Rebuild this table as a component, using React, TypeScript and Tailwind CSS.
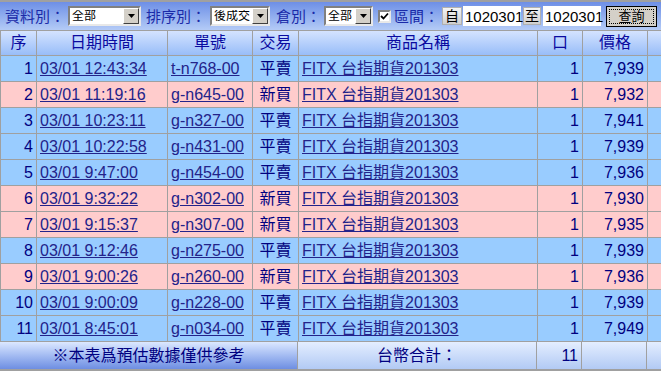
import React from 'react';

type Row = {
  no: number;
  time: string;
  id: string;
  side: string;
  qty: number;
  price: string;
};

const rows: Row[] = [
  { no: 1, time: '03/01 12:43:34', id: 't-n768-00', side: '平賣', qty: 1, price: '7,939' },
  { no: 2, time: '03/01 11:19:16', id: 'g-n645-00', side: '新買', qty: 1, price: '7,932' },
  { no: 3, time: '03/01 10:23:11', id: 'g-n327-00', side: '平賣', qty: 1, price: '7,941' },
  { no: 4, time: '03/01 10:22:58', id: 'g-n431-00', side: '平賣', qty: 1, price: '7,939' },
  { no: 5, time: '03/01 9:47:00', id: 'g-n454-00', side: '平賣', qty: 1, price: '7,936' },
  { no: 6, time: '03/01 9:32:22', id: 'g-n302-00', side: '新買', qty: 1, price: '7,930' },
  { no: 7, time: '03/01 9:15:37', id: 'g-n307-00', side: '新買', qty: 1, price: '7,935' },
  { no: 8, time: '03/01 9:12:46', id: 'g-n275-00', side: '平賣', qty: 1, price: '7,939' },
  { no: 9, time: '03/01 9:00:26', id: 'g-n260-00', side: '新買', qty: 1, price: '7,936' },
  { no: 10, time: '03/01 9:00:09', id: 'g-n228-00', side: '平賣', qty: 1, price: '7,939' },
  { no: 11, time: '03/01 8:45:01', id: 'g-n034-00', side: '平賣', qty: 1, price: '7,949' },
];

const grid = 'grid grid-cols-[36px_131px_85px_46px_239px_45px_65px_14px]';
const cell = 'border-r border-[#a0a0a0] flex items-center h-full';

const Select = ({ w, text }: { w: string; text: string }) => (
  <div className={`${w} h-[20px] shrink-0 bg-white border-2 border-t-[#808080] border-l-[#808080] border-b-[#e8e8e8] border-r-[#e8e8e8] flex items-center`}>
    <span className="flex-1 pl-[2px] text-[12px] text-black leading-none whitespace-nowrap overflow-hidden">{text}</span>
    <div className="w-[16px] h-[16px] bg-[#d4d0c8] border border-t-white border-l-white border-b-[#404040] border-r-[#404040] flex items-center justify-center">
      <svg width="7" height="4" viewBox="0 0 7 4">
        <path d="M0 0h7L3.5 4z" fill="#000" />
      </svg>
    </div>
  </div>
);

const Label = ({ children, className = '' }: { children: React.ReactNode; className?: string }) => (
  <span className={`shrink-0 text-[15px] text-[#1a2aa8] leading-none whitespace-nowrap ${className}`}>{children}</span>
);

export default function App() {
  return (
    <div
      className="w-[661px] h-[371px] overflow-hidden bg-[#a0a0a0] text-[#000080]"
      style={{ fontFamily: '"Liberation Sans", Arial, "Noto Sans CJK TC", sans-serif' }}
    >
      <div className="h-[2px] bg-[#a0a0a0]" />
      {/* toolbar */}
      <div className="h-[28px] bg-gradient-to-b from-[#6e8fe6] to-[#b4cbf6] flex items-center pl-[5px]">
        <Label className="w-[63px]">資料別：</Label>
        <Select w="w-[73px]" text="全部" />
        <Label className="ml-[5px] w-[64px]">排序別：</Label>
        <Select w="w-[60px]" text="後成交" />
        <Label className="ml-[6px] w-[48px]">倉別：</Label>
        <Select w="w-[49px]" text="全部" />
        <div className="ml-[5px] shrink-0 w-[13px] h-[13px] bg-white border-2 border-t-[#808080] border-l-[#808080] border-b-[#e8e8e8] border-r-[#e8e8e8] flex items-center justify-center">
          <svg width="9" height="9" viewBox="0 0 9 9">
            <path d="M1 4l2.5 2.5L8 1.5" stroke="#000" strokeWidth="1.8" fill="none" />
          </svg>
        </div>
        <Label className="ml-[3px] w-[48px]">區間：</Label>
        <div className="shrink-0 w-[20px] h-[18px] bg-gradient-to-b from-[#f4f4f4] to-[#cfcfcf] border border-[#b0b0b0] flex items-center justify-center text-[14px] text-black leading-none">
          自
        </div>
        <div className="ml-[1px] shrink-0 w-[58px] h-[20px] bg-white flex items-center pl-[2px] text-[15px] text-black leading-none">
          1020301
        </div>
        <div className="ml-[2px] shrink-0 w-[18px] h-[18px] bg-gradient-to-b from-[#f4f4f4] to-[#cfcfcf] border border-[#b0b0b0] flex items-center justify-center text-[14px] text-black leading-none">
          至
        </div>
        <div className="ml-[2px] shrink-0 w-[58px] h-[20px] bg-white flex items-center pl-[2px] text-[15px] text-black leading-none">
          1020301
        </div>
        <div className="ml-[5px] shrink-0 w-[51px] h-[21px] bg-[#d4d0c8] border border-black flex items-center justify-center">
          <div className="w-[45px] h-[15px] border border-dotted border-black flex items-center justify-center text-[13px] text-black leading-none">
            查詢
          </div>
        </div>
      </div>
      <div className="h-[1px] bg-[#a0a0a0]" />
      {/* header */}
      <div className={`${grid} h-[24px] bg-gradient-to-b from-[#d4e3ff] to-[#98bdf8] text-[16px] text-[#0a0aa0] border-l border-[#a0a0a0]`}>
        <div className={`${cell} justify-center`}>序</div>
        <div className={`${cell} justify-center`}>日期時間</div>
        <div className={`${cell} justify-center`}>單號</div>
        <div className={`${cell} justify-center`}>交易</div>
        <div className={`${cell} justify-center`}>商品名稱</div>
        <div className={`${cell} justify-center`}>口</div>
        <div className={`${cell} justify-center`}>價格</div>
        <div />
      </div>
      {/* rows */}
      {rows.map((r) => (
        <div
          key={r.no}
          className={`${grid} h-[26px] border-t border-l border-[#a0a0a0] text-[16px] ${r.side === '新買' ? 'bg-[#ffcccc]' : 'bg-[#99ccff]'}`}
        >
          <div className={`${cell} justify-end pr-[3px]`}>{r.no}</div>
          <div className={`${cell} pl-[3px]`}>
            <span className="underline text-[#23238a]">{r.time}</span>
          </div>
          <div className={`${cell} pl-[3px]`}>
            <span className="underline text-[#23238a]">{r.id}</span>
          </div>
          <div className={`${cell} justify-center`}>{r.side}</div>
          <div className={`${cell} pl-[3px]`}>
            <span className="underline text-[#23238a] whitespace-nowrap">FITX 台指期貨201303</span>
          </div>
          <div className={`${cell} justify-end pr-[3px]`}>{r.qty}</div>
          <div className={`${cell} justify-end pr-[3px]`}>{r.price}</div>
          <div />
        </div>
      ))}
      {/* footer */}
      <div className={`${grid} h-[28px] border-t border-[#a0a0a0] text-[16px]`}>
        <div className="col-span-4 border-r border-[#a0a0a0] bg-gradient-to-b from-[#dce8ff] to-[#6e8ee2] flex items-center justify-center">
          ※本表爲預估數據僅供參考
        </div>
        <div className="border-r border-[#a0a0a0] bg-gradient-to-b from-[#e4eeff] to-[#b2caf4] flex items-center justify-center">
          台幣合計：
        </div>
        <div className="border-r border-[#a0a0a0] bg-gradient-to-b from-[#e4eeff] to-[#b2caf4] flex items-center justify-end pr-[3px]">
          11
        </div>
        <div className="border-r border-[#a0a0a0] bg-gradient-to-b from-[#e4eeff] to-[#b2caf4]" />
        <div className="bg-gradient-to-b from-[#e4eeff] to-[#b2caf4]" />
      </div>
    </div>
  );
}
